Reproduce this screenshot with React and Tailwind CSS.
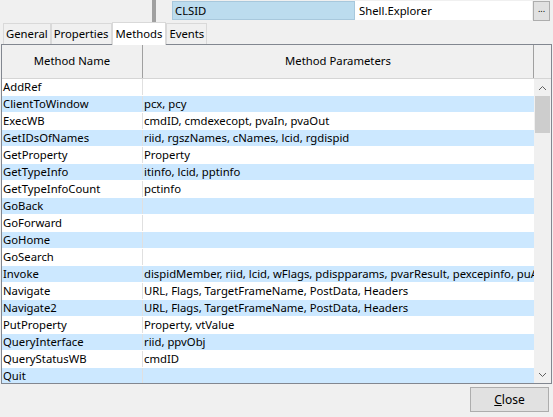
const ROWS = [
  ['AddRef', ''],
  ['ClientToWindow', 'pcx, pcy'],
  ['ExecWB', 'cmdID, cmdexecopt, pvaIn, pvaOut'],
  ['GetIDsOfNames', 'riid, rgszNames, cNames, lcid, rgdispid'],
  ['GetProperty', 'Property'],
  ['GetTypeInfo', 'itinfo, lcid, pptinfo'],
  ['GetTypeInfoCount', 'pctinfo'],
  ['GoBack', ''],
  ['GoForward', ''],
  ['GoHome', ''],
  ['GoSearch', ''],
  ['Invoke', 'dispidMember, riid, lcid, wFlags, pdispparams, pvarResult, pexcepinfo, puArgErr'],
  ['Navigate', 'URL, Flags, TargetFrameName, PostData, Headers'],
  ['Navigate2', 'URL, Flags, TargetFrameName, PostData, Headers'],
  ['PutProperty', 'Property, vtValue'],
  ['QueryInterface', 'riid, ppvObj'],
  ['QueryStatusWB', 'cmdID'],
  ['Quit', ''],
];

const TABS = ['General', 'Properties', 'Methods', 'Events'];

// Flechita de la barra de desplazamiento
function Chevron({ up }) {
  return (
    <svg width="9" height="6" viewBox="0 0 9 6" className="text-[#606060]">
      <path d={up ? 'M1 5 L4.5 1.5 L8 5' : 'M1 1 L4.5 4.5 L8 1'} fill="none" stroke="currentColor" strokeWidth="1" />
    </svg>
  );
}

export default function App() {
  return (
    <div
      className="w-[553px] h-[417px] bg-[#f0f0f0] text-[11.3px] text-black overflow-hidden flex flex-col"
      style={{ fontFamily: '"Noto Sans", sans-serif' }}
    >
      {/* fila superior: propiedad CLSID */}
      <div className="h-[22px] flex items-start shrink-0">
        <div className="w-[152px]" />
        <div className="w-[4px] h-[22px] bg-[#a0a0a0]" />
        <div className="w-[16px]" />
        <div className="mt-[1px] h-[19px] w-[183px] bg-[#bcdcee] border border-[#a8c8dc] pl-[2px] leading-[17px]">CLSID</div>
        <div className="mt-[1px] h-[19px] w-[177px] bg-white pl-[4px] leading-[19px]">Shell.Explorer</div>
        <div className="mt-[1px] ml-[1px] h-[20px] w-[17px] bg-[#e1e1e1] border border-[#adadad] text-[9px] leading-[14px] text-center">...</div>
      </div>

      {/* pestañas */}
      <div className="h-[22px] flex items-end pl-[3px] shrink-0">
        {TABS.map(t =>
          t === 'Methods' ? (
            <div key={t} className="h-[23px] px-[3px] bg-white border-x border-t border-[#d9d9d9] leading-[22px] relative top-[1px]">{t}</div>
          ) : (
            <div key={t} className="h-[21px] px-[2px] bg-[#f0f0f0] border-x border-t border-[#d9d9d9] leading-[20px]">{t}</div>
          )
        )}
      </div>

      {/* tabla de métodos */}
      <div className="mx-[1px] h-[340px] border border-[#828790] bg-white flex flex-col shrink-0">
        <div className="h-[34px] flex shrink-0 bg-[#f0f0f0] border-b border-[#d5d5d5]">
          <div className="w-[141px] border-r border-[#a0a0a0] flex items-center justify-center">Method Name</div>
          <div className="flex-1 border-r border-[#a0a0a0] flex items-center justify-center">Method Parameters</div>
          <div className="w-[17px]" />
        </div>
        <div className="flex flex-1 min-h-0">
          <div className="flex-1 min-w-0 overflow-hidden">
            {ROWS.map(([name, params], i) => (
              <div key={name} className={`h-[17px] flex leading-[16px] border-b border-white ${i % 2 ? 'bg-[#cce8ff]' : 'bg-white'}`}>
                <div className="w-[141px] shrink-0 border-r border-[#e0e0e0] pl-[1px] whitespace-nowrap">{name}</div>
                <div className="flex-1 pl-[1px] whitespace-nowrap overflow-hidden">{params}</div>
              </div>
            ))}
          </div>
          {/* barra de desplazamiento */}
          <div className="w-[17px] bg-[#f0f0f0] flex flex-col items-center">
            <div className="h-[17px] flex items-center justify-center"><Chevron up /></div>
            <div className="w-[15px] h-[37px] bg-[#cdcdcd]" />
            <div className="flex-1" />
            <div className="h-[17px] flex items-center justify-center"><Chevron /></div>
          </div>
        </div>
      </div>

      {/* botón cerrar */}
      <div className="flex justify-end pr-[4px] pt-[3px]">
        <button className="w-[79px] h-[25px] bg-[#e1e1e1] border border-[#adadad] text-[12px]">
          <span className="underline">C</span>lose
        </button>
      </div>
    </div>
  );
}
